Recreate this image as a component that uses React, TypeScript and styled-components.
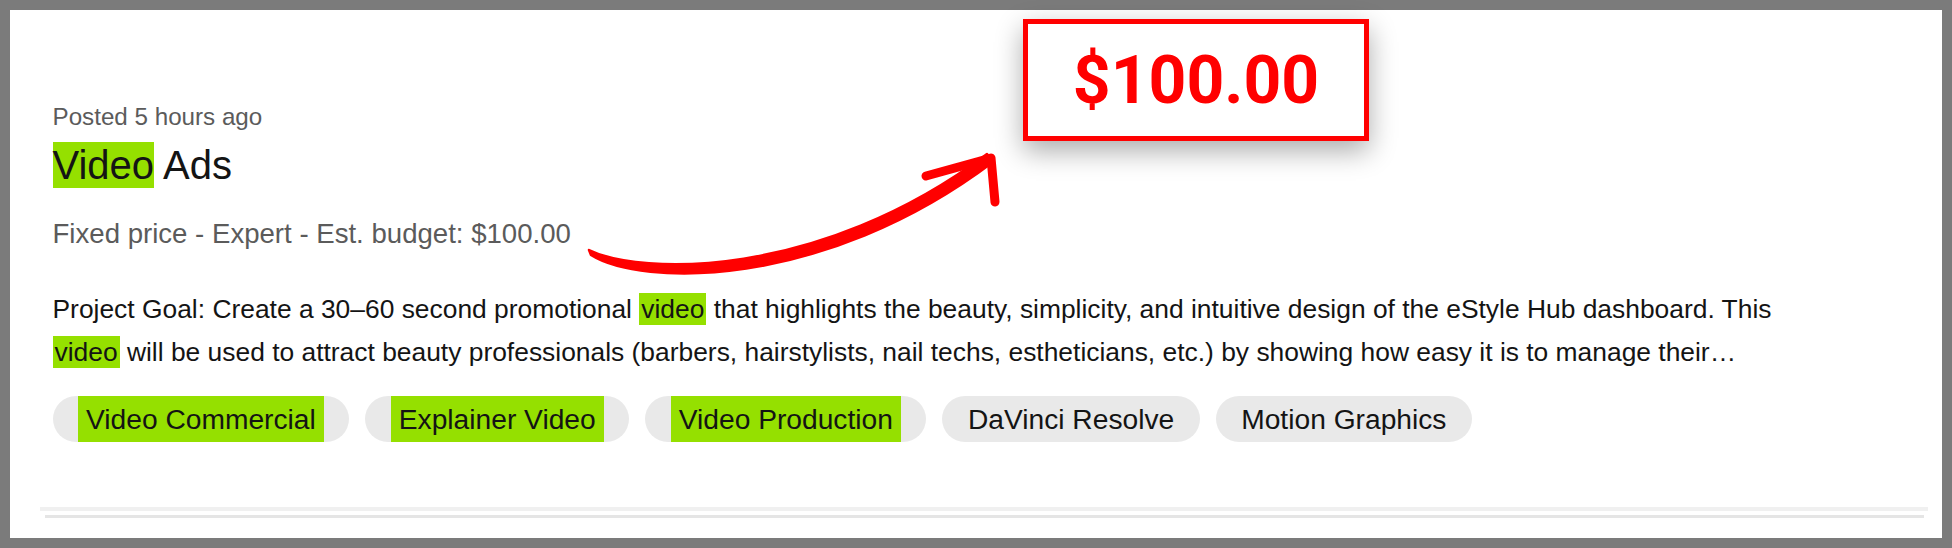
import React from "react";
import styled, { createGlobalStyle } from "styled-components";

const GlobalStyle = createGlobalStyle`
  html, body {
    margin: 0;
    padding: 0;
    background: #7b7b7b;
  }
  body {
    font-family: "Liberation Sans", Arial, Helvetica, sans-serif;
    -webkit-font-smoothing: antialiased;
  }
`;

const Page = styled.div`
  position: relative;
  width: 1952px;
  height: 548px;
  padding: 10px;
  box-sizing: border-box;
  background: #7b7b7b;
`;

const Card = styled.section`
  height: 100%;
  box-sizing: border-box;
  background: #ffffff;
  padding: 92.7px 14px 0 42.5px;
  display: flex;
  flex-direction: column;
`;

const Meta = styled.p`
  margin: 0;
  font-size: 24.2px;
  line-height: 28px;
  color: #5b5b5b;
`;

const Title = styled.h2`
  margin: 11.6px 0 0;
  font-size: 40px;
  line-height: 46px;
  font-weight: 400;
  color: #141414;
`;

const Highlight = styled.mark<{ $block?: boolean }>`
  background: #95e000;
  color: inherit;
  display: ${(p) => (p.$block ? "inline-block" : "inline")};
  padding: ${(p) => (p.$block ? "0" : "1px 2px")};
`;

const Budget = styled.p`
  margin: 29.5px 0 0;
  font-size: 27.6px;
  line-height: 32px;
  color: #5b5b5b;
`;

const Description = styled.p`
  margin: 38px 0 0;
  max-width: 1762px;
  font-size: 26.4px;
  line-height: 43px;
  color: #141414;
`;

const TagList = styled.ul`
  list-style: none;
  margin: 22px 0 0;
  padding: 0;
  display: flex;
  gap: 16px;
`;

const Tag = styled.li`
  height: 46.5px;
  padding: 0 25.5px;
  border-radius: 24px;
  background: #e9e9e9;
  display: flex;
  align-items: center;
  font-size: 28.2px;
  color: #141414;
  white-space: nowrap;
`;

const TagText = styled.span<{ $hit: boolean }>`
  align-self: stretch;
  display: flex;
  align-items: center;
  padding: ${(p) => (p.$hit ? "0 8px" : "0")};
  background: ${(p) => (p.$hit ? "#95e000" : "transparent")};
`;

const DividerTop = styled.div`
  margin: 64.5px 0 0 -12.5px;
  height: 4px;
  background: #f0f0f0;
`;

const DividerBottom = styled.div`
  margin: 4px 4px 0 -7.5px;
  height: 3px;
  background: #e5e5e5;
`;

const PriceBox = styled.div`
  position: absolute;
  left: 1023px;
  top: 19px;
  width: 346px;
  height: 122px;
  box-sizing: border-box;
  border: 5px solid #ff0000;
  background: #ffffff;
  box-shadow: 0 10px 26px rgba(0, 0, 0, 0.33);
  display: flex;
  align-items: center;
  justify-content: center;
  font-family: Roboto, "Liberation Sans", sans-serif;
  font-weight: 700;
  font-size: 66px;
  color: #ff0000;
`;

const Overlay = styled.svg`
  position: absolute;
  left: 0;
  top: 0;
  width: 1952px;
  height: 548px;
  pointer-events: none;
`;

const tags = [
  { label: "Video Commercial", hit: true },
  { label: "Explainer Video", hit: true },
  { label: "Video Production", hit: true },
  { label: "DaVinci Resolve", hit: false },
  { label: "Motion Graphics", hit: false },
];

export default function App() {
  return (
    <>
      <GlobalStyle />
      <Page>
        <Card>
          <Meta>Posted 5 hours ago</Meta>
          <Title>
            <Highlight $block>Video</Highlight> Ads
          </Title>
          <Budget>Fixed price - Expert - Est. budget: $100.00</Budget>
          <Description>
            Project Goal: Create a 30–60 second promotional <Highlight>video</Highlight> that
            highlights the beauty, simplicity, and intuitive design of the eStyle Hub dashboard.
            This <Highlight>video</Highlight> will be used to attract beauty professionals (barbers,
            hairstylists, nail techs, estheticians, etc.) by showing how easy it is to manage their…
          </Description>
          <TagList>
            {tags.map((t) => (
              <Tag key={t.label}>
                <TagText $hit={t.hit}>{t.label}</TagText>
              </Tag>
            ))}
          </TagList>
          <DividerTop />
          <DividerBottom />
        </Card>
        <Overlay viewBox="0 0 1952 548">
          <path
            d="M589,250 C640,275 818,280 987,154 L993,162 C822,291 640,286 591,255 Z"
            fill="#ff0000"
            stroke="#ff0000"
            strokeWidth={2.5}
            strokeLinejoin="round"
          />
          <polyline
            points="926,176 991,158 995,202"
            fill="none"
            stroke="#ff0000"
            strokeWidth={9}
            strokeLinecap="round"
            strokeLinejoin="round"
          />
        </Overlay>
        <PriceBox>$100.00</PriceBox>
      </Page>
    </>
  );
}
